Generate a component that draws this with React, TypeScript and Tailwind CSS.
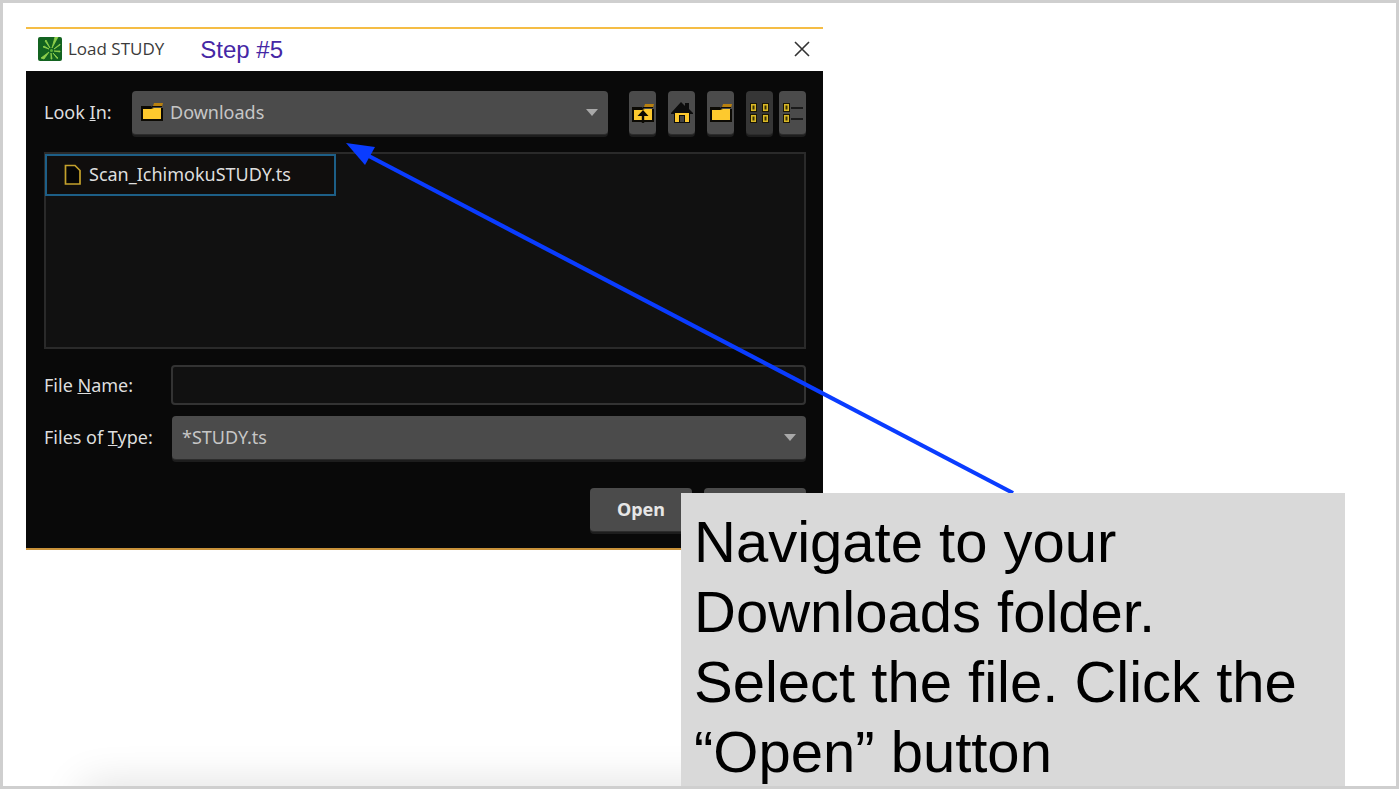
import React from "react";
import { clsx } from "clsx";

interface IconButtonProps {
  label: string;
  pressed?: boolean;
  children: React.ReactNode;
}

function IconButton({ label, pressed, children }: IconButtonProps) {
  return (
    <button
      type="button"
      aria-label={label}
      className={clsx(
        "flex h-11 w-[27px] items-center justify-center rounded-sm border-b border-[#2c2c2c] shadow-[0_2px_0_#1d1d1d]",
        pressed ? "bg-[#363636]" : "bg-[#4b4b4b]"
      )}
    >
      {children}
    </button>
  );
}

function FolderIcon({ up }: { up?: boolean }) {
  return (
    <svg width="24" height="22" viewBox="0 0 24 22" aria-hidden="true">
      <path d="M1 5h10l2 2h10v13H1z" fill="#0c0a04" />
      <path d="M13 5l1-3h9l-1 4h-9z" fill="#b8800f" />
      <path d="M3 8h8l3-1h7v11H3z" fill="#fdc92e" />
      <path d="M12 5.5h10" stroke="#0c0a04" strokeWidth="1" />
      {up && <path d="M12 8l5.500 6H13.200v7h-2.400v-7H6.500z" fill="#0c0a04" />}
    </svg>
  );
}

function HomeIcon() {
  return (
    <svg width="24" height="24" viewBox="0 0 24 24" aria-hidden="true">
      <path d="M11 1l4 4V2h4v6l4 4v1h-3v9H4v-9H1v-1z" fill="#0c0c0c" />
      <path d="M5 12h14v9h-4v-7H9v7H5z" fill="#fdc92e" />
      <path d="M10 15h4v6h-4z" fill="#444" />
    </svg>
  );
}

// One small outlined square of the view icons
function Tile({ x, y }: { x: number; y: number }) {
  return (
    <g>
      <rect x={x - 1} y={y - 1} width="7" height="9" fill="#1a1606" />
      <rect x={x + 0.75} y={y + 0.75} width="3.5" height="5.5" fill="#3a3208" stroke="#d9b826" strokeWidth="1.5" />
    </g>
  );
}

function GridIcon() {
  return (
    <svg width="22" height="24" viewBox="0 0 22 24" aria-hidden="true">
      <Tile x={2} y={3} />
      <Tile x={14} y={3} />
      <Tile x={2} y={14} />
      <Tile x={14} y={14} />
    </svg>
  );
}

function ListIcon() {
  return (
    <svg width="22" height="24" viewBox="0 0 22 24" aria-hidden="true">
      <Tile x={2} y={3} />
      <Tile x={2} y={14} />
      <path d="M9 7h12M9 18h12" stroke="#0c0c0c" strokeWidth="1.5" />
    </svg>
  );
}

function AppIcon() {
  return (
    <svg width="24" height="24" viewBox="0 0 24 24" aria-hidden="true">
      <rect width="24" height="24" rx="2" fill="#136320" />
      <path
        d="M14 11L17 0h3zM16 12l6-5v1zM16 14l6 0v1zM15 16l5 5-1 .5zM13 16l1 6h-1zM11 15l-5 7-3-1zM11 12L5 10l1-1zM12 11L7 4l1-1z"
        fill="#8fd04c"
        stroke="#8fd04c"
        strokeWidth="0.8"
      />
      <circle cx="13.500" cy="13.500" r="1.500" fill="#5fb03a" />
    </svg>
  );
}

function DropArrow() {
  return (
    <svg
      width="12"
      height="7"
      viewBox="0 0 12 7"
      aria-hidden="true"
      className="pointer-events-none absolute right-2.5 top-[18px]"
    >
      <path d="M0 0h12L6 7z" fill="#a9a9a9" />
    </svg>
  );
}

const selectClass =
  "h-11 w-full appearance-none rounded-sm border-b border-[#2c2c2c] bg-[#4b4b4b] pb-0.5 text-lg text-[#c6c6c6] shadow-[0_2px_0_#1d1d1d] outline-none";

function LoadDialog() {
  return (
    <section
      aria-label="Load STUDY"
      className="w-full max-w-[797px] border-y-2 border-t-[#f5bd45] border-b-[#c9923a] bg-[#090909] font-['Noto_Sans',sans-serif] text-lg text-[#dedede]"
    >
      <header className="flex h-[42px] items-center bg-white px-3 pb-0.5">
        <AppIcon />
        <h1 className="ml-1.5 font-['Open_Sans',sans-serif] text-[17px] text-[#3b3b3b]">Load STUDY</h1>
        <p className="ml-9 pt-0.5 font-['Liberation_Sans',sans-serif] text-2xl text-[#4527a5]">Step #5</p>
        <button type="button" aria-label="Close" className="ml-auto">
          <svg width="18" height="18" viewBox="0 0 18 18" aria-hidden="true">
            <path d="M2 2l14 14M16 2L2 16" stroke="#333" strokeWidth="1.600" />
          </svg>
        </button>
      </header>

      <form className="pb-4 pl-[18px] pr-[17px] pt-5" onSubmit={(e) => e.preventDefault()}>
        <div className="flex items-center">
          <label htmlFor="look-in" className="w-[88px] shrink-0 pb-0.5">
            Look <u>I</u>n:
          </label>
          <div className="relative flex-1">
            <select id="look-in" className={clsx(selectClass, "pl-[38px]")}>
              <option>Downloads</option>
            </select>
            <span className="pointer-events-none absolute left-2 top-2.5">
              <FolderIcon />
            </span>
            <DropArrow />
          </div>
          <div className="ml-[21px] flex gap-3">
            <IconButton label="Up one level">
              <FolderIcon up />
            </IconButton>
            <IconButton label="Home">
              <HomeIcon />
            </IconButton>
            <IconButton label="New folder">
              <FolderIcon />
            </IconButton>
            <div className="flex gap-1.5">
              <IconButton label="List" pressed>
                <GridIcon />
              </IconButton>
              <IconButton label="Details">
                <ListIcon />
              </IconButton>
            </div>
          </div>
        </div>

        <ul className="mt-[17px] h-[197px] border-2 border-[#2a2a2a] bg-[#111]">
          <li className="-ml-px flex h-[42px] w-[291px] items-center border-2 border-[#1d5f87] bg-[#100e0d] pl-[17px]">
            <svg width="18" height="22" viewBox="0 0 18 22" aria-hidden="true">
              <path d="M1.500 1.500h9.500l5 5v13.500H1.500z" fill="#050505" stroke="#c4a12c" strokeWidth="1.700" />
            </svg>
            <span className="pb-0.5 pl-[7px]">Scan_IchimokuSTUDY.ts</span>
          </li>
        </ul>

        <div className="mt-4 flex items-center">
          <label htmlFor="file-name" className="w-[127px] shrink-0">
            File <u>N</u>ame:
          </label>
          <input
            id="file-name"
            type="text"
            className="h-10 min-w-0 flex-1 rounded-sm border-2 border-[#333] bg-[#111] px-2 outline-none"
          />
        </div>

        <div className="mt-[11px] flex items-center">
          <label htmlFor="file-type" className="w-32 shrink-0 pb-0.5">
            Files of <u>T</u>ype:
          </label>
          <div className="relative flex-1">
            <select id="file-type" className={clsx(selectClass, "pl-2.5")}>
              <option>*STUDY.ts</option>
            </select>
            <DropArrow />
          </div>
        </div>

        <div className="mt-7 flex justify-end gap-3">
          <button
            type="submit"
            className="h-11 w-[102px] rounded-sm border-b border-[#2c2c2c] bg-[#4b4b4b] pb-0.5 font-bold text-[#e6e6e6] shadow-[0_2px_0_#1d1d1d]"
          >
            Open
          </button>
          <button type="button" aria-label="Cancel" className="h-11 w-[102px] rounded-sm bg-[#4b4b4b]" />
        </div>
      </form>
    </section>
  );
}

export default function App() {
  return (
    <div className="flex min-h-screen bg-[#cfcfcf] p-[3px]">
      <main className="relative flex-1 overflow-hidden bg-white pl-[23px] pt-6">
        <LoadDialog />

        {/* Soft shade along the bottom edge */}
        <div className="absolute left-20 right-[470px] top-full h-10 shadow-[0_0_44px_rgba(0,0,0,0.14)]" />

        {/* Pointer from the note to the folder list */}
        <svg
          width="680"
          height="360"
          viewBox="0 0 680 360"
          aria-hidden="true"
          className="pointer-events-none absolute left-[340px] top-[137px]"
        >
          <path d="M22 14L670 353" stroke="#0a3cff" strokeWidth="4.200" />
          <path d="M3 3l29 4-10 18z" fill="#0a3cff" />
        </svg>

        <p className="absolute left-[678px] right-[51px] top-[490px] bg-[#d9d9d9] px-[13px] pb-2 pt-3.5 font-['Liberation_Sans',sans-serif] text-[58px] leading-[70px] text-black">
          Navigate to your
          <br />
          Downloads folder.
          <br />
          Select the file. Click the
          <br />
          “Open” button
        </p>
      </main>
    </div>
  );
}
